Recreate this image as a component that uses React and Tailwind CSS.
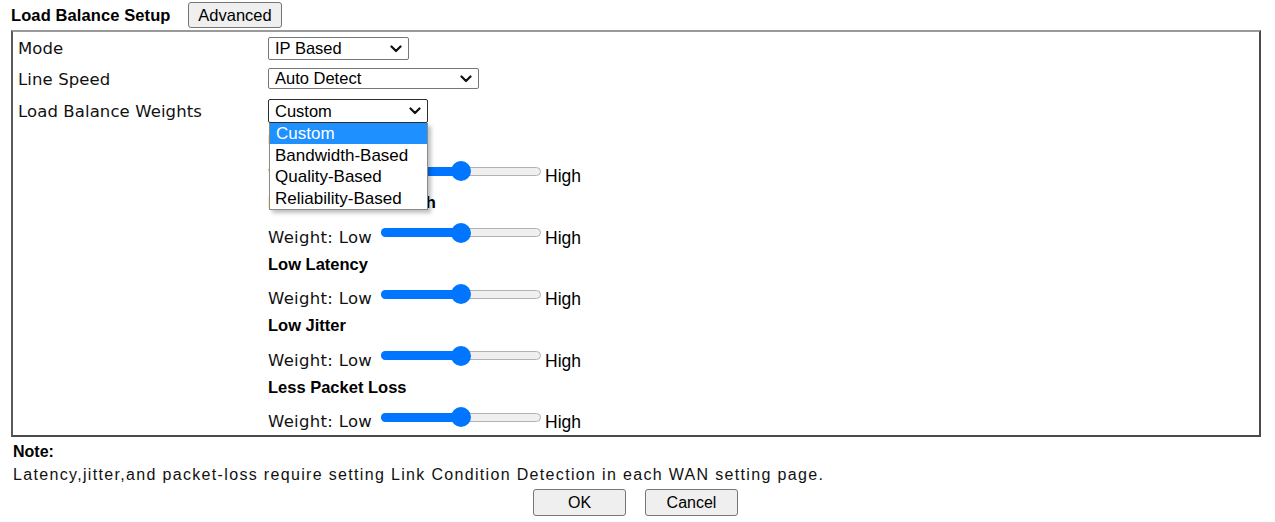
import React from "react";

function Chevron() {
  return (
    <svg width="12" height="8" viewBox="0 0 12 8" className="shrink-0">
      <path d="M1.5 1.5 L6 6 L10.5 1.5" fill="none" stroke="#111" strokeWidth="2.2" strokeLinecap="round" strokeLinejoin="round" />
    </svg>
  );
}

function Select({ value, w, h, dark, children }) {
  return (
    <div className="relative">
      <div
        className={`flex items-center justify-between box-border border rounded-[2px] bg-white pl-[6px] pr-[6px] text-[16.5px] text-black font-['Liberation_Sans',Arial,sans-serif] ${dark ? "border-[#2e2e2e]" : "border-[#767676]"} ${w} ${h}`}
      >
        <span className="leading-none">{value}</span>
        <Chevron />
      </div>
      {children}
    </div>
  );
}

function Slider() {
  return (
    <div className="relative w-[160px] h-[20px] mt-[10px] shrink-0">
      <div className="absolute left-0 right-0 top-[5.5px] h-[9px] rounded-full bg-[#efefef] border border-[#b2b2b2]" />
      <div className="absolute left-0 w-[82px] top-[5.5px] h-[9px] rounded-full bg-[#0075ff]" />
      <div className="absolute left-[70px] top-0 w-[20px] h-[20px] rounded-full bg-[#0075ff]" />
    </div>
  );
}

function Section({ title, last }) {
  return (
    <div>
      <div className="h-[20px] flex items-center text-[16.5px] font-bold text-black font-['Liberation_Sans',Arial,sans-serif] whitespace-nowrap">
        {title}
      </div>
      <div className={`flex items-start ${last ? "h-[38px]" : "h-[41.5px]"}`}>
        <span className="w-[113px] shrink-0 mt-[15px] leading-[20px] text-[16.5px] tracking-[0.3px] text-[#111] font-['DejaVu_Sans',sans-serif] whitespace-nowrap">
          Weight:&nbsp;Low
        </span>
        <Slider />
        <span className="ml-[4px] mt-[15px] leading-[20px] text-[17.5px] text-black font-['Liberation_Sans',Arial,sans-serif]">
          High
        </span>
      </div>
    </div>
  );
}

const LABEL = "w-[250px] text-[16.5px] tracking-[0.1px] text-[#111] font-['DejaVu_Sans',sans-serif] whitespace-nowrap";

export default function App() {
  return (
    <div className="w-[1275px] h-[522px] bg-white overflow-hidden relative text-black">
      {/* Header */}
      <div className="flex items-center h-[30px] pl-[11px]">
        <span className="text-[16.5px] tracking-[0.1px] font-bold leading-none font-['Liberation_Sans',Arial,sans-serif] w-[177px] whitespace-nowrap">
          Load Balance Setup
        </span>
        <button className="w-[94px] h-[26px] box-border border border-[#767676] rounded-[3px] bg-[#efefef] text-[16.5px] leading-none font-['Liberation_Sans',Arial,sans-serif]">
          Advanced
        </button>
      </div>

      {/* Box */}
      <div className="ml-[11px] w-[1250px] h-[407px] box-border border-2 border-t-[#9a9a9a] border-l-[#5a5a5a] border-r-[#4a4a4a] border-b-[#4a4a4a] pl-[5px]">
        <div className="flex items-center mt-[5px] h-[23px]">
          <div className={`${LABEL} pt-[2px]`}>Mode</div>
          <Select value="IP Based" w="w-[141px]" h="h-[23px]" />
        </div>
        <div className="flex items-center mt-[8px] h-[21px]">
          <div className={`${LABEL} pt-[3px]`}>Line Speed</div>
          <Select value="Auto Detect" w="w-[211px]" h="h-[21px]" />
        </div>
        <div className="flex items-center mt-[10px] h-[24px] relative z-10">
          <div className={`${LABEL} pt-[3px]`}>Load Balance Weights</div>
          <Select value="Custom" w="w-[160px]" h="h-[24px]" dark>
            <div className="absolute left-[1px] top-full w-[159px] bg-white border border-[#8a8a8a] border-t-0 shadow-[3px_3px_4px_rgba(0,0,0,0.25)] text-[17px] font-['Liberation_Sans',Arial,sans-serif] whitespace-nowrap">
              <div className="h-[21px] flex items-center pl-[6px] bg-[#1e90ff] text-white">Custom</div>
              <div className="h-[21.5px] flex items-center pl-[5px] pt-[1px]">Bandwidth-Based</div>
              <div className="h-[21.5px] flex items-center pl-[5px] pt-[1px]">Quality-Based</div>
              <div className="h-[21.5px] flex items-center pl-[5px] pt-[1px]">Reliability-Based</div>
            </div>
          </Select>
        </div>
        <div className="mt-[8px] ml-[250px]">
          <Section title="Upload Bandwidth" />
          <Section title="Download Bandwidth" />
          <Section title="Low Latency" />
          <Section title="Low Jitter" />
          <Section title="Less Packet Loss" last />
        </div>
      </div>

      {/* Note */}
      <div className="pl-[13px] mt-[5px] h-[20px] flex items-center text-[16px] font-bold font-['Liberation_Sans',Arial,sans-serif]">
        Note:
      </div>
      <div className="pl-[13px] mt-[3px] h-[20px] flex items-center text-[16px] tracking-[1.33px] text-[#111] font-['Liberation_Sans',Arial,sans-serif] whitespace-nowrap">
        Latency,jitter,and packet-loss require setting Link Condition Detection in each WAN setting page.
      </div>
      <div className="flex justify-center gap-[19px] mt-[4px] pr-[4px]">
        <button className="w-[93px] h-[27px] box-border border border-[#767676] rounded-[3px] bg-[#efefef] text-[16px] leading-none font-['Liberation_Sans',Arial,sans-serif]">
          OK
        </button>
        <button className="w-[93px] h-[27px] box-border border border-[#767676] rounded-[3px] bg-[#efefef] text-[16px] leading-none font-['Liberation_Sans',Arial,sans-serif]">
          Cancel
        </button>
      </div>
    </div>
  );
}
